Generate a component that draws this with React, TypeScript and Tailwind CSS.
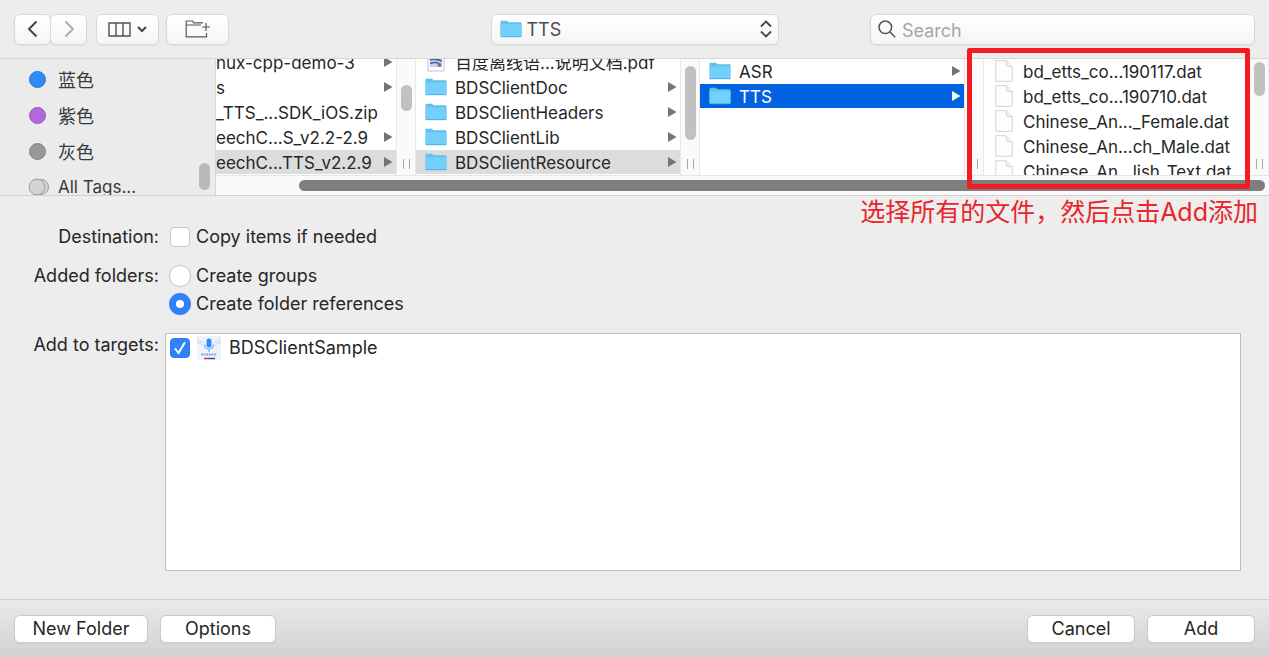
import { useState, type ReactNode } from "react"
import clsx from "clsx"

type Entry = {
  name: string
  kind: "folder" | "file" | "pdf" | "none"
  hasChildren?: boolean
  state?: "open" | "selected"
}

const tags = [
  { name: "蓝色", color: "bg-[#2e8bfa] border-[#2478dd]" },
  { name: "紫色", color: "bg-[#b367dc] border-[#9c55c4]" },
  { name: "灰色", color: "bg-[#98989b] border-[#858588]" },
]

const archives: Entry[] = [
  { name: "nux-cpp-demo-3", kind: "none", hasChildren: true },
  { name: "s", kind: "none", hasChildren: true },
  { name: "_TTS_...SDK_iOS.zip", kind: "none" },
  { name: "eechC...S_v2.2-2.9", kind: "none", hasChildren: true },
  { name: "eechC...TTS_v2.2.9", kind: "none", hasChildren: true, state: "open" },
]

const sdkFiles: Entry[] = [
  { name: "百度离线语...说明文档.pdf", kind: "pdf" },
  { name: "BDSClientDoc", kind: "folder", hasChildren: true },
  { name: "BDSClientHeaders", kind: "folder", hasChildren: true },
  { name: "BDSClientLib", kind: "folder", hasChildren: true },
  { name: "BDSClientResource", kind: "folder", hasChildren: true, state: "open" },
]

const resources: Entry[] = [
  { name: "ASR", kind: "folder", hasChildren: true },
  { name: "TTS", kind: "folder", hasChildren: true, state: "selected" },
]

const dataFiles: Entry[] = [
  { name: "bd_etts_co...190117.dat", kind: "file" },
  { name: "bd_etts_co...190710.dat", kind: "file" },
  { name: "Chinese_An..._Female.dat", kind: "file" },
  { name: "Chinese_An...ch_Male.dat", kind: "file" },
  { name: "Chinese_An...lish_Text.dat", kind: "file" },
]

function FolderIcon() {
  return (
    <svg viewBox="0 0 22 18" className="h-[18px] w-[22px] shrink-0" aria-hidden="true">
      <path d="M.5 1.6Q.5.7 1.4.7H7l1.6 1.6h12q.9 0 .9.9V16q0 .9-.9.9H1.4q-.9 0-.9-.9z" fill="#62bfea" />
      <path d="M.5 4.2h21V16q0 .9-.9.9H1.4q-.9 0-.9-.9z" fill="#73d0fa" />
      <path d="M.8 16.7h20.4" stroke="#52ade0" strokeWidth="1" />
    </svg>
  )
}

function FileIcon() {
  return (
    <svg viewBox="0 0 18 22" className="h-[22px] w-[18px] shrink-0" aria-hidden="true">
      <path d="M.8.7h10.4l6 6v14.6H.8z" fill="#fefefe" stroke="#d3d3d3" />
      <path d="M11.2.9v3.4q0 2.2 2.2 2.3h3.7" fill="#f3f3f3" stroke="#d3d3d3" />
    </svg>
  )
}

function PdfIcon() {
  return (
    <svg viewBox="0 0 22 22" className="size-[22px] shrink-0" aria-hidden="true">
      <path d="M3 0h16v20H3z" fill="#fff" stroke="#c4c4c4" />
      <path d="M5 7h12v9H5z" fill="#c3d3ee" />
      <path d="M5 9q4-2 12 1M5 12.500q6-2 9 0" fill="none" stroke="#3f5f9e" strokeWidth="1.500" />
      <circle cx="14.500" cy="14" r="2" fill="#77797f" />
    </svg>
  )
}

function AppIcon() {
  return (
    <svg viewBox="0 0 24 24" className="size-6 shrink-0" aria-hidden="true">
      <path d="M0 0h24v24H0z" fill="#eef3f9" />
      <path d="M0 3l7 4M24 3l-7 4M0 6l6 3M24 6l-6 3" stroke="#c4d8ee" strokeWidth="1" />
      <rect x="9.500" y="2.500" width="5" height="9" rx="2.500" fill="#2f8df5" />
      <path d="M7.500 8.500c0 6 9 6 9 0M12 13v3" fill="none" stroke="#6db2fa" strokeWidth="1.200" />
      <path d="M4 18.500h16" stroke="#8fa5d8" strokeWidth="2" strokeDasharray="2 .6" />
      <path d="M7 22.500h5" stroke="#d33445" strokeWidth="1.500" />
      <path d="M12 22.500h6" stroke="#2c4fae" strokeWidth="1.500" />
    </svg>
  )
}

function EntryRow({ entry }: { entry: Entry }) {
  const selected = entry.state === "selected"

  return (
    <li
      className={clsx(
        "flex h-6 shrink-0 items-center pr-[3px]",
        entry.kind === "folder" && "gap-2 pl-[9px]",
        entry.kind === "pdf" && "gap-2 pl-[9px]",
        entry.kind === "file" && "gap-2.5 pl-[11px]",
        entry.state === "open" && "bg-[#dcdcdc]",
        selected && "bg-[#0262e0] text-white"
      )}
    >
      {entry.kind === "folder" && <FolderIcon />}
      {entry.kind === "pdf" && <PdfIcon />}
      {entry.kind === "file" && <FileIcon />}
      <span className="flex-1 pt-0.5 leading-6 whitespace-nowrap">{entry.name}</span>
      {entry.hasChildren && (
        <svg viewBox="0 0 10 10" className={clsx("size-2.5", selected ? "fill-white" : "fill-[#757575]")} aria-hidden="true">
          <path d="M1 0l8.500 5L1 10z" />
        </svg>
      )}
    </li>
  )
}

type ColumnProps = {
  entries: Entry[]
  className: string
  thumb?: string
  scrolledDown?: boolean
}

function Column({ entries, className, thumb, scrolledDown }: ColumnProps) {
  return (
    <div className={clsx("flex min-w-0", className)}>
      <ul
        className={clsx(
          "flex min-w-0 flex-1 flex-col gap-px overflow-hidden",
          scrolledDown ? "justify-end pb-px" : "justify-start"
        )}
      >
        {entries.map((entry) => (
          <EntryRow key={entry.name} entry={entry} />
        ))}
      </ul>
      <div className="flex w-5 shrink-0 flex-col items-center border-x border-[#e9e9e9] bg-[#fafafa]">
        {thumb && <div className={clsx("w-[11px] rounded-full bg-[#c1c1c1]", thumb)} />}
        <div className="mt-auto mb-1.5 h-2.5 w-[7px] border-x border-[#a9a9a9]" />
      </div>
    </div>
  )
}

function ToolbarButton({ label, className, children }: { label: string; className: string; children: ReactNode }) {
  return (
    <button
      type="button"
      aria-label={label}
      className={clsx(
        "flex h-[31px] items-center justify-center rounded-md border border-[#d9d9d9] bg-linear-to-b from-white to-[#f5f5f5] shadow-xs",
        className
      )}
    >
      {children}
    </button>
  )
}

function Toolbar() {
  return (
    <header className="grid h-[59px] shrink-0 grid-cols-[1fr_288px_1fr] items-center border-b border-[#d6d6d6] px-[14px]">
      <div className="flex">
        <ToolbarButton label="Back" className="w-[37px]">
          <svg viewBox="0 0 12 18" className="h-[18px] w-3" fill="none" stroke="#444" strokeWidth="2">
            <path d="M9.500 1.500L2 9l7.500 7.500" />
          </svg>
        </ToolbarButton>
        <ToolbarButton label="Forward" className="-ml-px w-[37px]">
          <svg viewBox="0 0 12 18" className="h-[18px] w-3" fill="none" stroke="#a9a9a9" strokeWidth="1.800">
            <path d="M2.500 1.500L10 9l-7.500 7.500" />
          </svg>
        </ToolbarButton>
        <ToolbarButton label="View as columns" className="ml-[9px] w-[63px] gap-1.5">
          <svg viewBox="0 0 23 15" className="h-[15px] w-[23px]" fill="none" stroke="#505050" strokeWidth="1.400">
            <path d="M1 1h21v13H1zM8 1v13M15 1v13" />
          </svg>
          <svg viewBox="0 0 10 7" className="h-[7px] w-2.5" fill="none" stroke="#444" strokeWidth="2">
            <path d="M1 1l4 4 4-4" />
          </svg>
        </ToolbarButton>
        <ToolbarButton label="New folder" className="ml-[7px] w-[63px]">
          <svg viewBox="0 0 25 19" className="h-[19px] w-[25px]" fill="none" stroke="#585858" strokeWidth="1.200">
            <path d="M1.200 5H16M18 2.800H8.500L7.500 1H1.200v15.800h20.300V13M21 3v8M17 7h8" />
          </svg>
        </ToolbarButton>
      </div>

      <div className="relative">
        <select
          aria-label="Current folder"
          className="h-[31px] w-full appearance-none rounded-md border border-[#d9d9d9] bg-linear-to-b from-white to-[#f5f5f5] pl-[35px] text-[18px] text-[#4c4c4c] shadow-xs"
        >
          <option>TTS</option>
        </select>
        <div className="pointer-events-none absolute inset-0 flex items-center justify-between pr-[7px] pl-[9px]">
          <FolderIcon />
          <svg viewBox="0 0 12 18" className="h-[18px] w-3" fill="none" stroke="#444" strokeWidth="1.800">
            <path d="M1 6.500l5-5 5 5M1 11.500l5 5 5-5" />
          </svg>
        </div>
      </div>

      <label className="ml-auto flex h-[31px] w-[385px] items-center gap-1.5 rounded-md border border-[#d9d9d9] bg-linear-to-b from-white to-[#f5f5f5] pl-[7px] shadow-xs">
        <svg viewBox="0 0 18 18" className="size-[18px] shrink-0" fill="none" stroke="#555" strokeWidth="1.500">
          <circle cx="7.300" cy="7.300" r="6.300" />
          <path d="M12 12l5.200 5.200" />
        </svg>
        <input
          type="search"
          aria-label="Search"
          placeholder="Search"
          className="h-full min-w-0 flex-1 bg-transparent pt-0.5 text-[18px] outline-none placeholder:text-[#a6a6a6]"
        />
      </label>
    </header>
  )
}

function Sidebar() {
  return (
    <aside className="flex w-[216px] shrink-0 border-r border-[#d5d5d5] bg-[#ebebeb]">
      <ul className="flex-1 overflow-hidden pt-0.5 pl-[29px] text-[#3a3a3a]">
        {tags.map((tag) => (
          <li key={tag.name} className="flex h-9 items-center gap-3">
            <span className={clsx("size-[17px] rounded-full border", tag.color)} />
            <span className="pt-0.5 text-[18px]">{tag.name}</span>
          </li>
        ))}
        <li className="flex h-9 items-center gap-2">
          <svg viewBox="0 0 22 18" className="-ml-px h-[18px] w-[22px]" fill="#d4d4d4" stroke="#9c9c9c">
            <circle cx="13" cy="9" r="7.500" />
            <circle cx="9" cy="9" r="7.900" />
          </svg>
          <span className="pt-0.5">All Tags...</span>
        </li>
      </ul>
      <div className="flex w-4 flex-col justify-end pb-[5px]">
        <div className="h-[27px] w-[11px] rounded-full bg-[#b9b9b9]" />
      </div>
    </aside>
  )
}

function FileBrowser() {
  return (
    <section className="relative flex h-[137px] shrink-0 border-b border-[#d0d0d0]">
      <Sidebar />
      <div className="flex min-w-0 flex-1 flex-col bg-white">
        <div className="flex h-[116px] text-[#262626]">
          <Column entries={archives} scrolledDown className="w-[200px] shrink-0" thumb="mt-[26px] h-[26px]" />
          <Column entries={sdkFiles} scrolledDown className="w-[284px] shrink-0" thumb="mt-[7px] h-[74px]" />
          <Column entries={resources} className="w-[284px] shrink-0" />
          <Column entries={dataFiles} className="flex-1" thumb="mt-[3px] h-[34px]" />
        </div>
        <div className="flex flex-1 items-center border-t border-[#e5e5e5] bg-[#fafafa] pr-1 pl-[83px]">
          <div className="h-[11px] flex-1 rounded-full bg-[#7e7e7e]" />
        </div>
      </div>

      {/* callout over the last column */}
      <div className="pointer-events-none absolute -top-[11px] right-[19px] h-[141px] w-[283px] rounded-xs border-5 border-[#f21d22]" />
      <p className="pointer-events-none absolute top-full right-[11px] text-[25px] leading-[34px] whitespace-nowrap text-[#e8252b]">
        选择所有的文件，然后点击Add添加
      </p>
    </section>
  )
}

type ToggleProps = {
  checked: boolean
  onChange: (checked: boolean) => void
  children: ReactNode
}

function Checkbox({ checked, onChange, children }: ToggleProps) {
  return (
    <label className="flex h-6 w-fit items-center gap-[5px]">
      <span className="grid w-[22px] place-items-center">
        <input
          type="checkbox"
          checked={checked}
          onChange={(e) => onChange(e.target.checked)}
          className="col-start-1 row-start-1 size-5 appearance-none rounded-sm border border-[#c6c6c6] bg-white checked:border-[#2f7cf6] checked:bg-[#3182f7]"
        />
        {checked && (
          <svg viewBox="0 0 12 14" className="pointer-events-none col-start-1 row-start-1 h-3.5 w-3" fill="none" stroke="#fff" strokeWidth="2" strokeLinecap="round">
            <path d="M1.500 8l3 4 6-10" />
          </svg>
        )}
      </span>
      {children}
    </label>
  )
}

function Radio({ checked, onChange, children }: ToggleProps) {
  return (
    <label className="flex h-6 w-fit items-center gap-[5px]">
      <input
        type="radio"
        name="added-folders"
        checked={checked}
        onChange={(e) => onChange(e.target.checked)}
        className="size-[22px] appearance-none rounded-full border border-[#c6c6c6] bg-white checked:border-[7px] checked:border-[#3182f7]"
      />
      {children}
    </label>
  )
}

function ImportOptions() {
  const [copyItems, setCopyItems] = useState<boolean>(false)
  const [folderMode, setFolderMode] = useState<"groups" | "references">("references")
  const [inTarget, setInTarget] = useState<boolean>(true)

  return (
    <main className="grid flex-1 grid-cols-[159px_1fr] grid-rows-[24px_54px_1fr] gap-x-1.5 gap-y-[15px] pt-[29px] pr-7 pb-7 text-[18px] leading-6">
      <span className="text-right">Destination:</span>
      <div className="pl-1">
        <Checkbox checked={copyItems} onChange={setCopyItems}>Copy items if needed</Checkbox>
      </div>

      <span className="text-right">Added folders:</span>
      <div role="radiogroup" aria-label="Added folders" className="flex flex-col gap-1 pl-1">
        <Radio checked={folderMode === "groups"} onChange={() => setFolderMode("groups")}>Create groups</Radio>
        <Radio checked={folderMode === "references"} onChange={() => setFolderMode("references")}>Create folder references</Radio>
      </div>

      <span className="text-right">Add to targets:</span>
      <div className="border border-[#bdbdbd] bg-white px-[3px] py-0.5">
        <Checkbox checked={inTarget} onChange={setInTarget}>
          <span className="flex items-center gap-2 pl-px">
            <AppIcon />
            BDSClientSample
          </span>
        </Checkbox>
      </div>
    </main>
  )
}

function PushButton({ className, children }: { className: string; children: ReactNode }) {
  return (
    <button
      type="button"
      className={clsx("h-7 rounded-md border border-[#cbcbcb] bg-white text-[18px] leading-6 shadow-xs", className)}
    >
      {children}
    </button>
  )
}

export default function App() {
  return (
    <div className="flex min-h-screen flex-col bg-[#ededed] font-['Inter','Noto_Sans_CJK_SC',sans-serif] text-[17px] text-[#262626]">
      <Toolbar />
      <FileBrowser />
      <ImportOptions />
      <footer className="flex h-[58px] shrink-0 items-center gap-3 border-t border-[#cfcfcf] bg-linear-to-b from-[#e9e9e9] to-[#d2d2d2] px-[14px]">
        <PushButton className="w-[134px]">New Folder</PushButton>
        <PushButton className="w-[116px]">Options</PushButton>
        <PushButton className="ml-auto w-[108px]">Cancel</PushButton>
        <PushButton className="w-[108px]">Add</PushButton>
      </footer>
    </div>
  )
}
